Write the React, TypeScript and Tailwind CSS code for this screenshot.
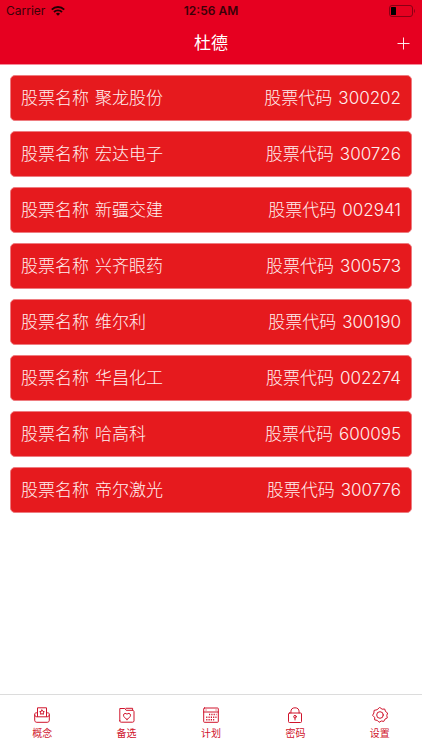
import type { ReactNode } from "react";

type Stock = { name: string; code: string };

const stocks: Stock[] = [
    { name: "聚龙股份", code: "300202" },
    { name: "宏达电子", code: "300726" },
    { name: "新疆交建", code: "002941" },
    { name: "兴齐眼药", code: "300573" },
    { name: "维尔利", code: "300190" },
    { name: "华昌化工", code: "002274" },
    { name: "哈高科", code: "600095" },
    { name: "帝尔激光", code: "300776" },
];

const Icon = ({ children }: { children: ReactNode }) => (
    <svg className="size-4" viewBox="0 0 16 16" fill="none" stroke="currentColor" strokeWidth="1" strokeLinejoin="round" strokeLinecap="round" aria-hidden="true">
        {children}
    </svg>
);

const TrayIcon = () => (
    <Icon>
        <path d="M3.500 9.500V.8h9v8.700" />
        <path d="M3.500 5.800H2.300C1.300 5.800.7 6.400.7 7.300v5.900c0 1.300.8 2.100 2.100 2.100h10.400c1.300 0 2.100-.8 2.100-2.100V7.300c0-.9-.6-1.500-1.600-1.500h-1.200" />
        <path d="M.7 7.800c.2 1.300.9 2 2.200 2h10.200c1.300 0 2-.7 2.200-2" />
        <path d="M8 3l.8 1.300 1.500.4-1 1.100.1 1.500L8 6.700l-1.400.6.1-1.500-1-1.100 1.500-.4z" />
    </Icon>
);

const FolderIcon = () => (
    <Icon>
        <path d="M.8 13.800V1.500h5l1.400 1.800h6.300c.9 0 1.500.6 1.500 1.500v9c0 .8-.5 1.400-1.400 1.400H2.200c-.9 0-1.400-.6-1.400-1.400z" />
        <path d="M7 1.300h6.600v2" />
        <path d="M8 12.400C6.200 11.200 4.500 10 4.500 8.200c0-2 2.500-2.500 3.500-.9 1-1.600 3.500-1.100 3.500.9 0 1.800-1.700 3-3.500 4.200z" />
    </Icon>
);

const CalendarIcon = () => (
    <Icon>
        <rect x="0.700" y="1" width="14.600" height="14.300" rx="0.700" />
        <path d="M.7 5h14.600M3 3h.1M13 3h.1" />
        <path d="M6 7.600h7.500M3.200 10.200h10.300M3.200 12.800h8" strokeWidth="1.500" strokeDasharray="1.200 1.100" strokeLinecap="butt" />
    </Icon>
);

const LockIcon = () => (
    <Icon>
        <rect x="1.500" y="6" width="13" height="9.500" rx="0.900" />
        <path d="M3.900 6V4.900a4.100 4.100 0 0 1 8.200 0V6" />
        <circle cx="8" cy="9.700" r="1.300" />
        <path d="M8 11v2" />
    </Icon>
);

const GearIcon = () => (
    <Icon>
        <path d="M8 .6l2.100 1.600 2.600-.2.800 2.500 2.100 1.500-.8 2.400.5 2.500-2.300 1.200-1.200 2.300-2.500-.4-2.200 1.300-1.800-1.900-2.600-.5-.1-2.600L.6 8.300l1.300-2.300.2-2.600 2.600-.6z" />
        <circle cx="8" cy="8" r="3.300" />
    </Icon>
);

const tabs = [
    { label: "概念", icon: <TrayIcon /> },
    { label: "备选", icon: <FolderIcon /> },
    { label: "计划", icon: <CalendarIcon /> },
    { label: "密码", icon: <LockIcon /> },
    { label: "设置", icon: <GearIcon /> },
];

const StatusBar = () => (
    <div className="grid h-[22px] grid-cols-3 items-center px-[6px] text-[12px] text-[#3b0008]">
        <div className="flex items-center gap-[6px]">
            <span>Carrier</span>
            <svg className="h-[10px] w-[14px]" viewBox="0 0 14 10" fill="none" stroke="#200004" strokeWidth="1.900" aria-hidden="true">
                <path d="M.8 3.600a8.800 8.800 0 0 1 12.400 0M3 6a5.700 5.700 0 0 1 8 0" />
                <path d="M7 9.800L4.900 7.700a3 3 0 0 1 4.200 0z" fill="#200004" stroke="none" />
            </svg>
        </div>
        <span className="text-center font-semibold">12:56 AM</span>
        <svg className="h-[12px] w-[27px] justify-self-end" viewBox="0 0 27 12" aria-hidden="true">
            <rect x="0.500" y="0.500" width="23" height="11" rx="2.500" fill="none" stroke="#8a0014" />
            <rect x="2" y="2" width="5" height="8" rx="0.500" fill="#000" />
            <path d="M25 4c1.300.6 1.300 3.400 0 4z" fill="#8a0014" />
        </svg>
    </div>
);

const StockRow = ({ name, code }: Stock) => (
    <li className="flex h-[46px] items-center justify-between rounded-[5px] border border-[#ee7c80] bg-[#e61a1e] px-[10px] pb-px text-[17px] leading-[24px] font-light text-[#fff0f0]">
        <span className="flex gap-[6px]">
            <span>股票名称</span>
            <span>{name}</span>
        </span>
        <span className="flex gap-[6px]">
            <span>股票代码</span>
            <span>{code}</span>
        </span>
    </li>
);

const App = () => {
    return (
        <div className="flex min-h-screen flex-col bg-white font-['Inter','Noto_Sans_CJK_SC',sans-serif]" lang="zh-CN">
            <header className="border-b border-[#f58a99] bg-[#e60020]">
                <StatusBar />
                <div className="grid h-[42px] grid-cols-3 items-center px-3">
                    <h1 className="col-start-2 text-center text-[17px] leading-[24px] text-white">杜德</h1>
                    <button type="button" aria-label="添加" className="justify-self-end text-white">
                        <svg className="size-[13px]" viewBox="0 0 13 13" stroke="currentColor" strokeWidth="0.900" aria-hidden="true">
                            <path d="M6.500 .5v12M.5 6.500h12" />
                        </svg>
                    </button>
                </div>
            </header>

            <main className="flex-1 px-[10px] pt-[10px] pb-[10px]">
                <ul className="flex flex-col gap-[10px]">
                    {stocks.map((stock) => (
                        <StockRow key={stock.code} {...stock} />
                    ))}
                </ul>
            </main>

            <nav className="grid h-[56px] grid-cols-5 border-t border-[#dcdcdc] bg-white">
                {tabs.map((tab) => (
                    <button key={tab.label} type="button" className="flex flex-col items-center gap-[3px] pt-3 text-[10px] leading-[14px] text-[#d0142c]">
                        {tab.icon}
                        <span>{tab.label}</span>
                    </button>
                ))}
            </nav>
        </div>
    );
};

export default App;
